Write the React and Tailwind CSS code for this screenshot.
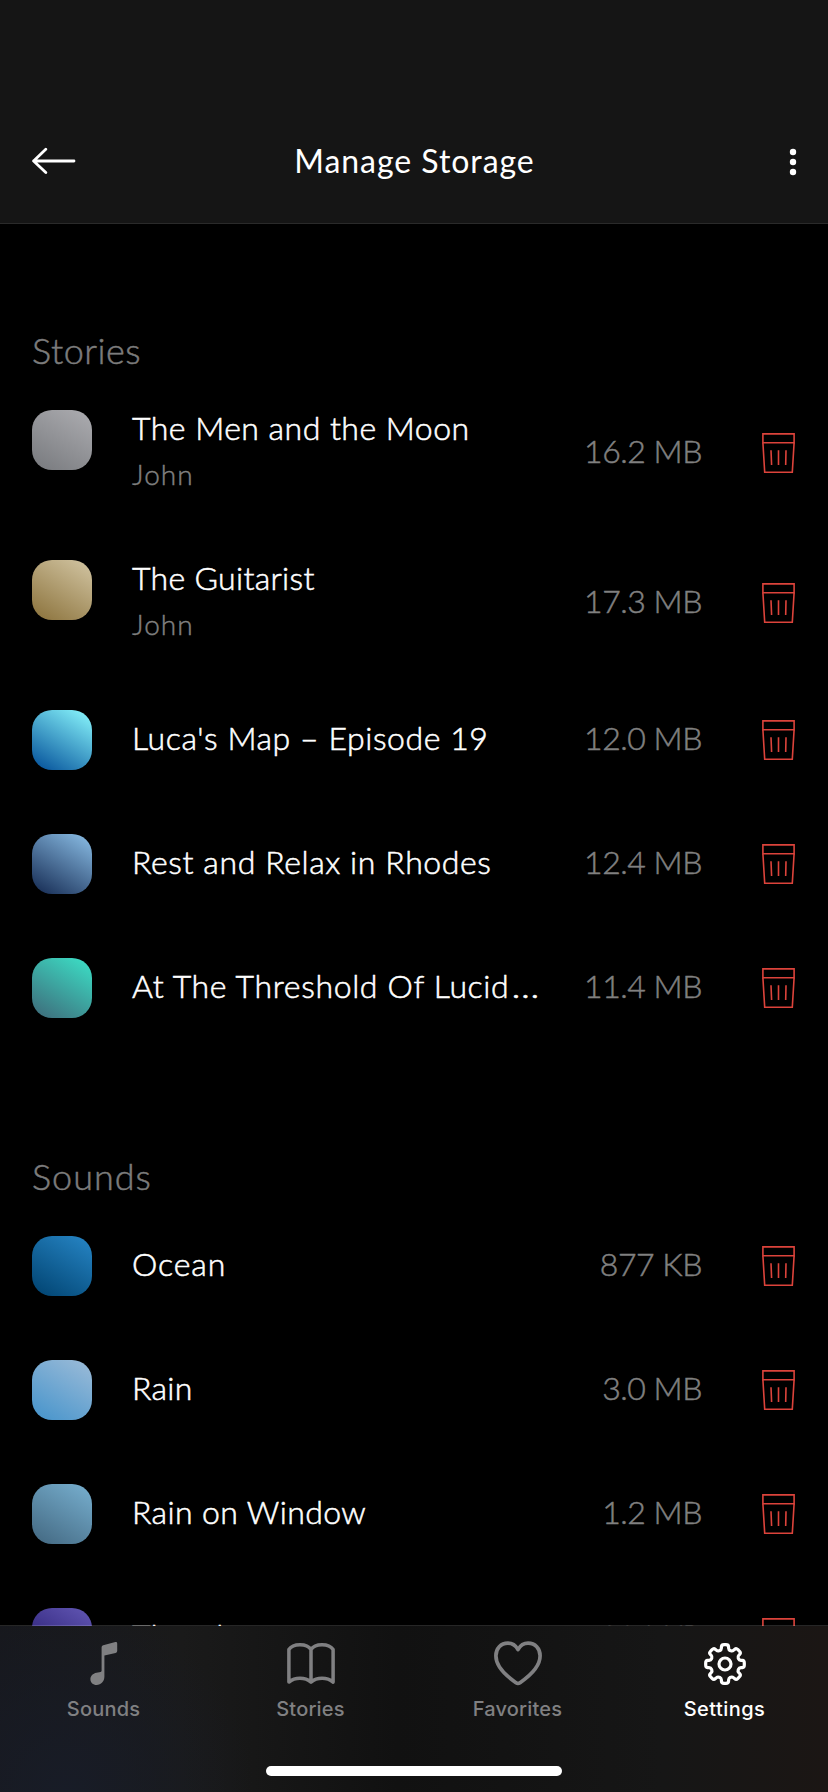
const stories = [
  { title: "The Men and the Moon", by: "John", size: "16.2 MB", art: "from-[#77797d] to-[#adadb1]", track: "tracking-[0.48px]" },
  { title: "The Guitarist", by: "John", size: "17.3 MB", art: "from-[#8a713a] to-[#d3c6a4]", track: "tracking-[0.32px]" },
  { title: "Luca's Map – Episode 19", size: "12.0 MB", art: "from-[#004c97] to-[#8cfaff]", track: "tracking-[0.57px]" },
  { title: "Rest and Relax in Rhodes", size: "12.4 MB", art: "from-[#132850] to-[#8cc0e8]", track: "tracking-[0.6px]" },
  { title: "At The Threshold Of Lucid", clipped: true, size: "11.4 MB", art: "from-[#3e6878] to-[#3ce2c8]", track: "tracking-[0.65px]" },
];

const sounds = [
  { title: "Ocean", size: "877 KB", art: "from-[#00426f] to-[#2786c6]", track: "tracking-[0.9px]" },
  { title: "Rain", size: "3.0 MB", art: "from-[#4493cb] to-[#9dbcd8]", track: "tracking-[0.3px]" },
  { title: "Rain on Window", size: "1.2 MB", art: "from-[#426780] to-[#78b0d0]", track: "tracking-[0.4px]" },
  { title: "Thunder", size: "394 KB", art: "from-[#1d1266] to-[#6257b4]", track: "tracking-[0.6px]" },
];

function TrashIcon() {
  return (
    <svg width="33" height="41" viewBox="0 0 33 41" fill="none" stroke="#dc433b" strokeWidth="1.6">
      <path d="M0.9 0.9H32.1V9.8H0.9Z" />
      <path d="M0.9 9.8L2.7 39.3H30.3L32.1 9.8" />
      <path d="M9 17.2L9.6 32M16.5 17.2V32M24 17.2L23.7 32" />
    </svg>
  );
}

function Row({ item }) {
  return (
    <li className={item.by ? "flex h-[86px]" : "flex h-[60px]"}>
      <div className={`size-[60px] shrink-0 rounded-[20px] bg-linear-[32deg] ${item.art}`} />
      <div className={item.by ? "-mt-0.5 ml-10 w-[430px]" : "ml-10 flex w-[430px] items-center pb-[5px]"}>
        <div className={`whitespace-nowrap text-[32px] leading-[40px] font-light text-white [-webkit-text-stroke:0.55px_white] ${item.track}`}>
          {item.title}
          {item.clipped && <span className="inline-block origin-left scale-x-120 pl-0.5">…</span>}
        </div>
        {item.by && (
          <div className="mt-2 text-[28px] leading-9 font-light tracking-[1.1px] text-[#808080] [-webkit-text-stroke:0.4px_#808080]">{item.by}</div>
        )}
      </div>
      <div className="flex flex-1 items-center justify-end">
        <span className="mb-[5px] text-[32px] leading-[40px] font-light tracking-[-0.45px] text-[#808080] [-webkit-text-stroke:0.5px_#808080]">{item.size}</span>
        <button className="ml-[60px]" aria-label="Delete">
          <TrashIcon />
        </button>
      </div>
    </li>
  );
}

function Section({ title, items, track }) {
  return (
    <section>
      <h2 className={`text-[36px] leading-[44px] font-light text-[#7c7c7c] [-webkit-text-stroke:0.5px_#7c7c7c] ${track}`}>{title}</h2>
      <ul className="mt-[38px] flex flex-col gap-16">
        {items.map((item) => (
          <Row key={item.title} item={item} />
        ))}
      </ul>
    </section>
  );
}

function gearOutline() {
  const pts = [];
  for (let i = 0; i < 8; i++) {
    [[-15, 14.6], [-10, 19.6], [10, 19.6], [15, 14.6]].forEach(([a, r]) => {
      const rad = ((i * 45 + a - 90) * Math.PI) / 180;
      pts.push([22 + r * Math.cos(rad), 22 + r * Math.sin(rad)]);
    });
  }
  const mix = (p, q, t) => [p[0] + (q[0] - p[0]) * t, p[1] + (q[1] - p[1]) * t];
  const fmt = (p) => `${p[0].toFixed(2)} ${p[1].toFixed(2)}`;
  const n = pts.length;
  return (
    pts
      .map((p, i) => {
        const before = mix(p, pts[(i + n - 1) % n], 0.36);
        const after = mix(p, pts[(i + 1) % n], 0.36);
        return `${i ? "L" : "M"}${fmt(before)}Q${fmt(p)} ${fmt(after)}`;
      })
      .join("") + "Z"
  );
}

const tabs = [
  {
    name: "Sounds",
    icon: (
      <svg width="50" height="46" viewBox="0 1 50 46" fill="currentColor">
        <path d="M24.2 5.2Q22.6 5.6 22.6 7.2V30.8C22.6 31.4 22.2 31.8 21.6 31.9L17.5 32.8C13.8 33.6 11.4 36 11.4 39.2C11.4 42.6 14 45 17.6 45C22 45 25.4 41.6 25.4 36.6V15.6L36.6 13Q38.2 12.6 38.2 11V3.4Q38.2 1.6 36.4 2Z" />
      </svg>
    ),
  },
  {
    name: "Stories",
    icon: (
      <svg width="50" height="46" viewBox="0 0.5 50 46" fill="none" stroke="currentColor" strokeWidth="3.5" strokeLinejoin="round">
        <path d="M25 41.6V9C21 2.6 7 2.6 2.9 9V41.6C9 36.6 19 36.6 25 41.6C31 36.6 41 36.6 47.1 41.6V9C43 2.6 29 2.6 25 9" />
      </svg>
    ),
  },
  {
    name: "Favorites",
    icon: (
      <svg width="50" height="46" viewBox="0 0 50 46" fill="none" stroke="currentColor" strokeWidth="3.7" strokeLinejoin="round">
        <path d="M25 8.6C22.6 4.4 19 2.2 14.9 2.2C7.8 2.2 2.9 7.6 2.9 14.8C2.9 26.6 14.2 35.6 22.6 41.4C23.6 42.1 24.4 42.4 25 42.4C25.6 42.4 26.4 42.1 27.4 41.4C35.8 35.6 47.1 26.6 47.1 14.8C47.1 7.6 42.2 2.2 35.1 2.2C31 2.2 27.4 4.4 25 8.6Z" />
      </svg>
    ),
  },
  {
    name: "Settings",
    active: true,
    icon: (
      <svg width="44" height="44" viewBox="0 0 44 44" fill="none" stroke="currentColor" strokeWidth="3.2" strokeLinejoin="round">
        <path d={gearOutline()} />
        <circle cx="22" cy="22" r="6" />
      </svg>
    ),
  },
];

export default function App() {
  return (
    <div className="flex h-[1792px] w-[828px] flex-col overflow-hidden bg-black font-['Lato',sans-serif]">
      <header className="flex h-[224px] shrink-0 flex-col justify-end border-b border-[#2a2a2a] bg-[#151515]">
        <div className="grid h-[123px] grid-cols-[1fr_auto_1fr] items-center pr-[31px] pl-8">
          <svg className="mb-px" width="44" height="28" viewBox="0 0 44 28" fill="none" stroke="white" strokeWidth="2.8" strokeLinecap="round" strokeLinejoin="round">
            <path d="M1.6 14H42M13.8 2.2L1.6 14L13.8 25.6" />
          </svg>
          <h1 className="mb-0.5 text-[32px] leading-10 font-normal tracking-[0.95px] text-white">Manage Storage</h1>
          <svg className="justify-self-end" width="8" height="28" viewBox="0 0 8 28" fill="white">
            <circle cx="4" cy="4" r="3.2" />
            <circle cx="4" cy="14" r="3.2" />
            <circle cx="4" cy="24" r="3.2" />
          </svg>
        </div>
      </header>

      <main className="flex h-[1402px] shrink-0 flex-col gap-[136px] overflow-hidden pt-[104px] pr-[33px] pl-8">
        <Section title="Stories" items={stories} track="tracking-[0.5px]" />
        <Section title="Sounds" items={sounds} track="tracking-[1px]" />
      </main>

      <nav className="relative -mt-px flex h-[167px] shrink-0 flex-col items-center border-t border-white/15 bg-[radial-gradient(circle_at_8%_100%,#181c27_0%,transparent_24%),linear-gradient(to_right,#17181d_0%,#1a1a1a_22%,#111111_48%,#161616_80%,#1b1614_100%)] bg-clip-padding font-['Inter',sans-serif]">
        <div className="grid w-full grid-cols-4 pt-[15px]">
          {tabs.map((tab) => (
            <div key={tab.name} className={tab.active ? "flex flex-col items-center tracking-[0.45px] text-white" : "flex flex-col items-center tracking-[0.2px] text-[#808082]"}>
              <div className="flex h-[46px] items-center">{tab.icon}</div>
              <span className="mt-2 text-[20px] leading-7 font-medium">{tab.name}</span>
            </div>
          ))}
        </div>
        <div className="mt-auto mb-4 h-[10px] w-[296px] rounded-full bg-white" />
      </nav>
    </div>
  );
}
